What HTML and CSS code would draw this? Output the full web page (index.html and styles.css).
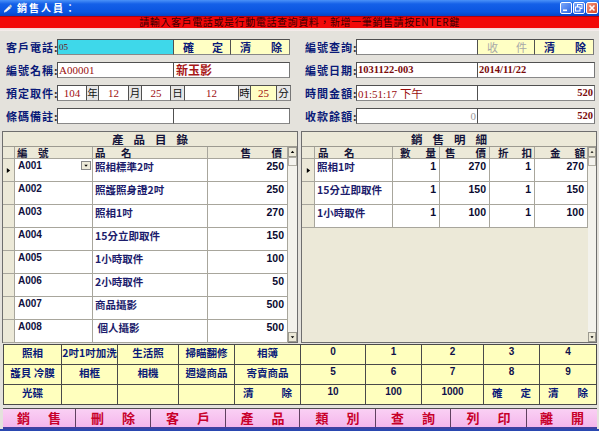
FILE: index.html
```html
<!DOCTYPE html>
<html>
<head>
<meta charset="utf-8">
<link rel="stylesheet" href="styles.css">
</head>
<body>
<div class="win">
  <div class="titlebar">
    <svg class="appicon" viewBox="0 0 10 10"><path d="M1 8 L6 3 L8 5 L3 9 Z" fill="#f4f4f4"/><path d="M6 3 L7.5 1.5 L9 3 L8 5 Z" fill="#c8c8c8"/><path d="M1 8 L3 9 L1 9.5 Z" fill="#fff"/></svg>
    <span class="title">銷售人員：</span>
    <div class="wbtns">
      <span class="wb"><svg viewBox="0 0 10 10"><rect x="2" y="6.5" width="4" height="1.6" fill="#fff"/></svg></span>
      <span class="wb"><svg viewBox="0 0 10 10"><rect x="3.5" y="1.5" width="4.5" height="4" fill="none" stroke="#fff" stroke-width="1"/><rect x="1.5" y="4" width="4.5" height="4" fill="#4a7ff0" stroke="#fff" stroke-width="1"/></svg></span>
      <span class="wb close"><svg viewBox="0 0 10 10"><path d="M2.5 2.5 L7.5 7.5 M7.5 2.5 L2.5 7.5" stroke="#fff" stroke-width="1.6"/></svg></span>
    </div>
  </div>
  <div class="msg">請輸入客戶電話或是行動電話查詢資料，新增一筆銷售請按ENTER鍵</div>
  <div class="band"></div>

  <div class="form">
    <div class="col">
      <div class="row">
        <span class="lbl"><span>客戶電話</span><span class="colon">:</span></span>
        <div class="box cyan w117 tiny">05</div>
        <div class="box btn w58"><span>確</span><span>定</span></div>
        <div class="box btn w60"><span>清</span><span>除</span></div>
      </div>
      <div class="row">
        <span class="lbl"><span>編號名稱</span><span class="colon">:</span></span>
        <div class="box w117 sv">A00001</div>
        <div class="box w117 name">新玉影</div>
      </div>
      <div class="row">
        <span class="lbl"><span>預定取件</span><span class="colon">:</span></span>
        <div class="box num w30">104</div>
        <div class="box unit w13">年</div>
        <div class="box num w31">12</div>
        <div class="box unit w14">月</div>
        <div class="box num w30">25</div>
        <div class="box unit w15">日</div>
        <div class="box num w55">12</div>
        <div class="box unit w13">時</div>
        <div class="box num yel w27">25</div>
        <div class="box unit w15">分</div>
      </div>
      <div class="row">
        <span class="lbl"><span>條碼備註</span><span class="colon">:</span></span>
        <div class="box w117"></div>
        <div class="box w117"></div>
      </div>
    </div>
    <div class="col">
      <div class="row">
        <span class="lbl"><span>編號查詢</span><span class="colon">:</span></span>
        <div class="box w122"></div>
        <div class="box btn dis w58"><span>收</span><span>件</span></div>
        <div class="box btn w60"><span>清</span><span>除</span></div>
      </div>
      <div class="row">
        <span class="lbl"><span>編號日期</span><span class="colon">:</span></span>
        <div class="box w122 sb">1031122-003</div>
        <div class="box w118 sb">2014/11/22</div>
      </div>
      <div class="row">
        <span class="lbl"><span>時間金額</span><span class="colon">:</span></span>
        <div class="box w122 sv">01:51:17 <span class="pm">下午</span></div>
        <div class="box w118 sb right">520</div>
      </div>
      <div class="row">
        <span class="lbl"><span>收款餘額</span><span class="colon">:</span></span>
        <div class="box w122 zero right">0</div>
        <div class="box w118 sb right">520</div>
      </div>
    </div>
  </div>

  <div class="tables">
    <div class="panel">
      <div class="ptitle">產品目錄</div>
      <div class="pbody">
        <div class="tgrid left-grid">
          <div class="hc sel"></div>
          <div class="hc h-code">編　號</div>
          <div class="hc h-name">品　名</div>
          <div class="hc h-price">售　價</div>

          <div class="sel cur"><svg viewBox="0 0 6 8"><path d="M1 1 L5 4 L1 7 Z" fill="#000"/></svg></div>
          <div class="dc code dd">A001<span class="ddbtn"><svg viewBox="0 0 8 8"><path d="M2 3 L6 3 L4 5.5 Z" fill="#000"/></svg></span></div>
          <div class="dc cn">照相標準2吋</div>
          <div class="dc amt">250</div>

          <div class="sel"></div><div class="dc code">A002</div><div class="dc cn">照護照身證2吋</div><div class="dc amt">250</div>
          <div class="sel"></div><div class="dc code">A003</div><div class="dc cn">照相1吋</div><div class="dc amt">270</div>
          <div class="sel"></div><div class="dc code">A004</div><div class="dc cn">15分立即取件</div><div class="dc amt">150</div>
          <div class="sel"></div><div class="dc code">A005</div><div class="dc cn">1小時取件</div><div class="dc amt">100</div>
          <div class="sel"></div><div class="dc code">A006</div><div class="dc cn">2小時取件</div><div class="dc amt">50</div>
          <div class="sel"></div><div class="dc code">A007</div><div class="dc cn">商品攝影</div><div class="dc amt">500</div>
          <div class="sel"></div><div class="dc code">A008</div><div class="dc cn">&nbsp;個人攝影</div><div class="dc amt">500</div>
        </div>
        <div class="vscroll">
          <span class="sbtn"><svg viewBox="0 0 8 8"><path d="M2 5 L6 5 L4 2.5 Z" fill="#000"/></svg></span>
          <span class="thumb"></span>
          <span class="sfill"></span>
          <span class="sbtn"><svg viewBox="0 0 8 8"><path d="M2 3 L6 3 L4 5.5 Z" fill="#000"/></svg></span>
        </div>
      </div>
    </div>

    <div class="panel">
      <div class="ptitle">銷售明細</div>
      <div class="pbody">
        <div class="rwrap">
          <div class="tgrid right-grid">
            <div class="hc sel"></div>
            <div class="hc h-rname">品　名</div>
            <div class="hc sp h-qty"><span>數</span><span>量</span></div>
            <div class="hc sp h-rprice"><span>售</span><span>價</span></div>
            <div class="hc sp h-disc"><span>折</span><span>扣</span></div>
            <div class="hc sp h-total"><span>金</span><span>額</span></div>

            <div class="sel cur"><svg viewBox="0 0 6 8"><path d="M1 1 L5 4 L1 7 Z" fill="#000"/></svg></div>
            <div class="dc cn">照相1吋</div><div class="dc amt">1</div><div class="dc amt">270</div><div class="dc amt">1</div><div class="dc amt">270</div>
            <div class="sel"></div>
            <div class="dc cn">15分立即取件</div><div class="dc amt">1</div><div class="dc amt">150</div><div class="dc amt">1</div><div class="dc amt">150</div>
            <div class="sel"></div>
            <div class="dc cn">1小時取件</div><div class="dc amt">1</div><div class="dc amt">100</div><div class="dc amt">1</div><div class="dc amt">100</div>
          </div>
        </div>
        <div class="vscroll narrow">
          <span class="sbtn"><svg viewBox="0 0 8 8"><path d="M2 5 L6 5 L4 2.5 Z" fill="#000"/></svg></span>
          <span class="thumb"></span>
          <span class="sfill"></span>
          <span class="sbtn"><svg viewBox="0 0 8 8"><path d="M2 3 L6 3 L4 5.5 Z" fill="#000"/></svg></span>
        </div>
      </div>
    </div>
  </div>

  <div class="keypad">
    <div class="k">照相</div><div class="k">2吋1吋加洗</div><div class="k">生活照</div><div class="k">掃瞄翻修</div><div class="k">相簿</div>
    <div class="k n">0</div><div class="k n">1</div><div class="k n">2</div><div class="k n">3</div><div class="k n">4</div>
    <div class="k">護貝 冷膜</div><div class="k">相框</div><div class="k">相機</div><div class="k">週邊商品</div><div class="k">寄賣商品</div>
    <div class="k n">5</div><div class="k n">6</div><div class="k n">7</div><div class="k n">8</div><div class="k n">9</div>
    <div class="k">光碟</div><div class="k"></div><div class="k"></div><div class="k"></div><div class="k sp2"><span>清</span><span>除</span></div>
    <div class="k n">10</div><div class="k n">100</div><div class="k n">1000</div><div class="k sp2 n2"><span>確</span><span>定</span></div><div class="k sp2 n2"><span>清</span><span>除</span></div>
  </div>

  <div class="actions">
    <div class="act"><span>銷</span><span>售</span></div>
    <div class="act"><span>刪</span><span>除</span></div>
    <div class="act"><span>客</span><span>戶</span></div>
    <div class="act"><span>產</span><span>品</span></div>
    <div class="act"><span>類</span><span>別</span></div>
    <div class="act"><span>查</span><span>詢</span></div>
    <div class="act"><span>列</span><span>印</span></div>
    <div class="act"><span>離</span><span>開</span></div>
  </div>
  <div class="frame-bottom"></div>
</div>
</body>
</html>
```

FILE: styles.css
```css
* { box-sizing: border-box; margin: 0; padding: 0; }
body {
  width: 599px; height: 431px; overflow: hidden;
  background: #E4E2DC;
  font-family: "Noto Sans CJK TC", sans-serif;
}
.win { width: 599px; height: 431px; display: flex; flex-direction: column; background: #E4E2DC; }

/* title bar */
.titlebar {
  height: 16px; flex: none;
  background: linear-gradient(#4A92F8, #1460E8 25%, #0A55E0 75%, #0744C4);
  display: flex; align-items: center; padding: 0 1px 0 3px;
}
.appicon { width: 10px; height: 10px; }
.title { color: #fff; font-size: 10px; font-weight: 700; letter-spacing: 2px; margin-left: 4px; line-height: 16px; }
.wbtns { margin-left: auto; display: flex; gap: 1px; }
.wb {
  width: 12px; height: 12px; border: 1px solid #fff; border-radius: 2px;
  background: linear-gradient(135deg, #7AA8FA, #2C66E4);
  display: flex;
}
.wb svg { width: 10px; height: 10px; }
.wb.close { background: linear-gradient(135deg, #F2967C, #D64628); }

.msg {
  height: 12px; flex: none; background: #F20808; color: #3A0000;
  font-size: 10px; line-height: 12px; text-align: center; white-space: nowrap;
  letter-spacing: 0.6px; box-shadow: inset 0 1px 0 #B00010;
}
.band { height: 3px; flex: none; background: linear-gradient(#F3D6D6, #F4F0EE); }

/* form */
.form {
  display: grid; grid-template-columns: 284px 290px; column-gap: 15px;
  padding: 8px 4px 7px 6px; flex: none;
}
.col { display: flex; flex-direction: column; gap: 7px; }
.row { display: flex; height: 16px; align-items: stretch; }
.lbl {
  width: 51px; flex: none; display: flex; justify-content: space-between; align-items: center;
  color: #0A1A78; font-size: 11px; font-weight: 700; letter-spacing: 1px; line-height: 16px;
  white-space: nowrap;
}
.colon { letter-spacing: 0; padding-right: 1px; color: #333; }
.box {
  border: 1px solid #505050; border-right-color: #777; border-bottom-color: #888;
  background: #fff; flex: none; margin-left: -1px; line-height: 14px;
  font-size: 11px; overflow: hidden; white-space: nowrap; padding: 0 1px;
}
.lbl + .box { margin-left: 0; }
.w13 { width: 13px; } .w14 { width: 14px; } .w15 { width: 15px; }
.w27 { width: 27px; } .w30 { width: 30px; } .w31 { width: 31px; } .w55 { width: 55px; }
.w58 { width: 58px; } .w60 { width: 60px; } .w117 { width: 117px; } .w118 { width: 118px; } .w122 { width: 122px; }
.cyan { background: #3ED8EA; }
.tiny { font-family: "Liberation Serif", serif; font-size: 9px; color: #6A1010; }
.btn {
  background: #FFFFC4; color: #0A1A78; font-weight: 700; font-size: 11px;
  display: flex; justify-content: space-between; padding: 0 7px 0 9px; align-items: center;
}
.btn.dis { color: #A8A8A8; font-weight: 400; }
.sv { font-family: "Liberation Serif", "Noto Sans CJK TC", serif; color: #9A0E0E; font-size: 11px; }
.sb { font-family: "Liberation Serif", "Noto Sans CJK TC", serif; color: #7A0A0A; font-weight: 700; font-size: 10.5px; }
.pm { font-family: "Noto Sans CJK TC", sans-serif; font-size: 11.5px; }
.name { color: #A81818; font-size: 12px; font-weight: 700; padding-left: 2px; }
.num { font-family: "Liberation Serif", serif; color: #A00E0E; text-align: center; font-size: 11px; }
.unit { background: #E6E6E6; color: #111; text-align: center; padding: 0; font-size: 10.5px; }
.yel { background: #FFFFC4; }
.right { text-align: right; }
.zero { font-family: "Liberation Serif", serif; color: #9A9A9A; }

/* tables */
.tables { display: flex; gap: 3px; padding: 0 2px; flex: none; height: 212px; }
.panel {
  width: 296px; height: 212px; border: 1px solid #6E6E6E; background: #ECE9D8;
  display: flex; flex-direction: column;
}
.ptitle {
  height: 15px; flex: none; border-bottom: 1px solid #9C9A90; text-align: center;
  font-size: 11.5px; font-weight: 700; line-height: 14px; letter-spacing: 10px; padding-left: 10px; color: #14143A;
  white-space: nowrap;
}
.pbody { display: flex; flex: 1; min-height: 0; }
.tgrid { display: grid; }
.left-grid { grid-template-columns: 12px 78px 115px 80px; grid-template-rows: 12px repeat(8, 23px); width: 285px; }
.rwrap { width: 286px; }
.right-grid { grid-template-columns: 13px 78px 47px 50px 45px 53px; grid-template-rows: 12px repeat(3, 23px); }
.hc {
  background: #ECE9D8; border-right: 1px solid #A8A69C; border-bottom: 1px solid #A8A69C;
  font-size: 10.5px; font-weight: 700; line-height: 11px; color: #141438; white-space: nowrap;
}
.h-code { padding-left: 2px; }
.h-name { padding-left: 2px; letter-spacing: 2.5px; }
.h-price { text-align: right; letter-spacing: 5px; }
.h-rname { padding-left: 3px; letter-spacing: 2.5px; }
.sp { display: flex; justify-content: space-between; }
.h-qty { padding: 0 3px 0 7px; }
.h-rprice { padding: 0 3px 0 5px; }
.h-disc { padding: 0 2px 0 8px; }
.h-total { padding: 0 2px 0 15px; }
.sel { background: #ECE9D8; border-right: 1px solid #A8A69C; border-bottom: 1px solid #A8A69C; display: flex; align-items: center; justify-content: center; }
.sel svg { width: 5px; height: 7px; }
.dc {
  background: #fff; border-right: 1px solid #A8A69C; border-bottom: 1px solid #A8A69C;
  font-size: 10px; line-height: 12px; padding: 1px 2px 0 3px; white-space: nowrap; overflow: hidden;
}
.code { font-family: "Liberation Sans", sans-serif; font-weight: 700; color: #101040; position: relative; }
.cn { font-weight: 700; color: #1C1C6C; font-size: 10.5px; padding-left: 2px; line-height: 13px; }
.amt { font-family: "Liberation Sans", sans-serif; font-weight: 700; color: #0A0A30; text-align: right; padding-right: 3px; font-size: 10.5px; }
.ddbtn {
  position: absolute; right: 1px; top: 2px; width: 10px; height: 9px;
  background: #ECE9D8; border: 1px solid #888; display: flex;
}
.ddbtn svg { width: 8px; height: 7px; }
.vscroll { width: 9px; flex: none; display: flex; flex-direction: column; background: #F3F2EC; }
.vscroll.narrow { width: 8px; }
.sbtn { height: 10px; flex: none; background: #ECE9D8; border: 1px solid #9C9A90; display: flex; }
.sbtn svg { width: 100%; height: 100%; }
.thumb { height: 9px; flex: none; background: #F4F3EE; border: 1px solid #B0AEA4; }
.sfill { flex: 1; }

/* keypad */
.keypad {
  margin: 1px 2px 0 3px; flex: none;
  display: grid; grid-template-columns: 57px 55px 60px 55px 65px 64px 55px 61px 55px 56px;
  grid-template-rows: repeat(3, 19px); gap: 1px; padding: 1px; background: #4A4A4A;
}
.k {
  background: #FFFFBE; color: #0A1A78; font-size: 10.5px; font-weight: 700; text-align: center;
  line-height: 16px; white-space: nowrap; overflow: hidden;
}
.k.n { font-family: "Liberation Sans", sans-serif; color: #10104A; font-size: 10px; line-height: 13px; }
.k.sp2 { display: flex; justify-content: space-between; padding: 0 8px; }
.k.n2 { line-height: 15px; }

/* action bar */
.actions {
  margin: 3px 2px 0 3px; flex: none; height: 21px;
  display: grid; grid-template-columns: 73px 75px 75px 74px 76px 75px 76px 70px;
  border-top: 1px solid #505050; border-bottom: 2px solid #4040A0; background: #F6BEF0;
}
.act {
  border-right: 1px solid #604060; color: #C8002A; font-size: 13px; font-weight: 700;
  display: flex; justify-content: center; gap: 18px; line-height: 18px; white-space: nowrap;
  background: linear-gradient(#FAD0F4, #F4B6EC);
}
.act:last-child { border-right: none; }
.frame-bottom { height: 2px; flex: none; background: #2A48B0; margin-top: auto; }
```
